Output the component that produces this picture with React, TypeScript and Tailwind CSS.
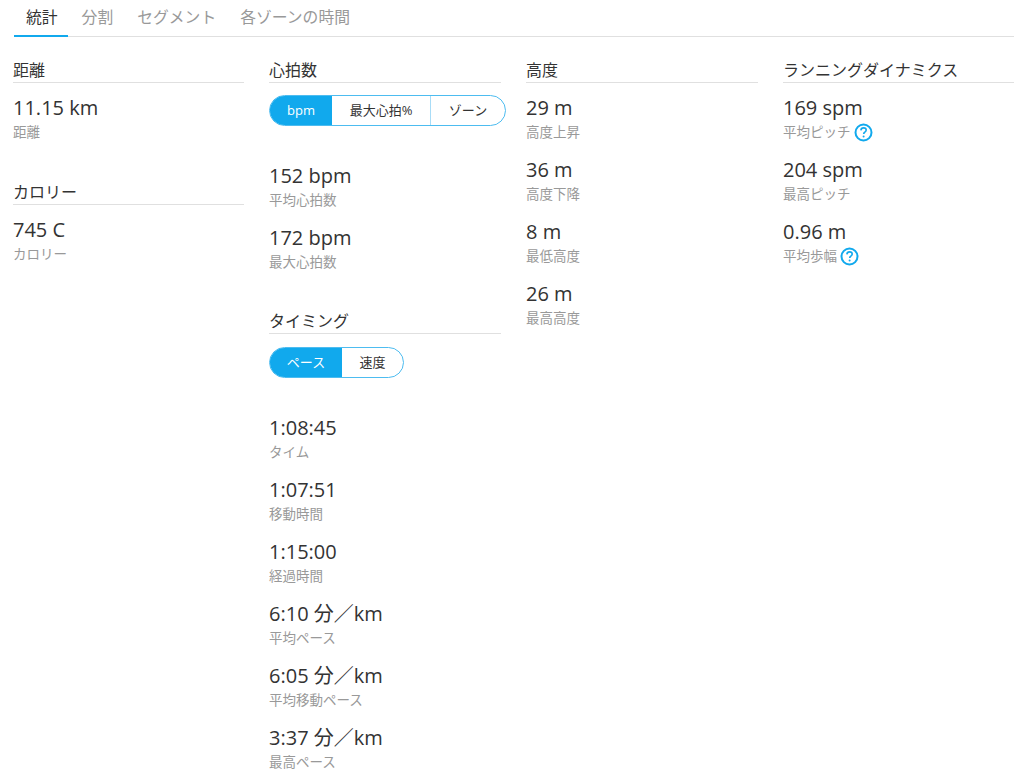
const FONT = "font-['Open_Sans','Noto_Sans_CJK_JP',sans-serif]"

const TABS = ['統計', '分割', 'セグメント', '各ゾーンの時間']

const HelpIcon = () => (
  <svg width="19" height="19" viewBox="0 0 19 19" fill="none" className="-mt-[2px] shrink-0">
    <circle cx="9.5" cy="9.5" r="8" stroke="#11a9ed" strokeWidth="2" />
    <path d="M6.9 7.4c.1-1.6 1.2-2.5 2.7-2.5 1.5 0 2.6.9 2.6 2.2 0 1-.5 1.5-1.4 2.1-.8.5-1.1.9-1.1 1.8" stroke="#11a9ed" strokeWidth="1.6" />
    <circle cx="9.6" cy="13.4" r="1" fill="#11a9ed" />
  </svg>
)

const Stat = ({ value, label, help }: { value: string; label: string; help?: boolean }) => (
  <div className="h-[62px]">
    <div className="h-[34px] text-[20px] leading-[34px] text-[#333]">{value}</div>
    <div className="flex h-[28px] items-start gap-[3px] text-[13.5px] leading-[14px] text-[#999]">
      {label}
      {help && <HelpIcon />}
    </div>
  </div>
)

const Heading = ({ title }: { title: string }) => (
  <h3 className="mb-[8px] h-[26px] border-b border-[#e0e0e0] text-[16px] leading-[26px] font-normal text-[#333]">{title}</h3>
)

const Toggle = ({ items, widths }: { items: string[]; widths: string[] }) => (
  <div className="pt-[4px] pb-[33px]">
    <div className="flex h-[31px] w-fit overflow-hidden rounded-[16px] border border-[#4dbcf0] text-[13px] text-[#333]">
      {items.map((item, i) => (
        <div
          key={item}
          className={`flex items-center justify-center ${widths[i]} ${i === 0 ? 'bg-[#11a9ed] text-white' : ''} ${i > 1 ? 'border-l border-[#a8dcf7]' : ''}`}
        >
          {item}
        </div>
      ))}
    </div>
  </div>
)

export default function App() {
  return (
    <div className={`h-[777px] w-[1024px] overflow-hidden bg-white ${FONT}`}>
      <nav className="mr-[10px] ml-[14px] flex h-[37px] border-b border-[#e0e0e0] text-[15.8px] leading-[35px]">
        {TABS.map((tab, i) => (
          <div
            key={tab}
            className={`h-[37px] whitespace-nowrap px-[12px] ${i === 0 ? 'mr-[1.6px] w-[54px] border-b-2 border-[#11a9ed] text-[#333]' : 'text-[#999]'}`}
          >
            {tab}
          </div>
        ))}
      </nav>

      <div className="mt-[20px] ml-[13px] grid w-[1001px] grid-cols-[231px_232px_232px_231px] gap-x-[25px]">
        <div>
          <Heading title="距離" />
          <Stat value="11.15 km" label="距離" />
          <div className="h-[26px]" />
          <Heading title="カロリー" />
          <Stat value="745 C" label="カロリー" />
        </div>

        <div>
          <Heading title="心拍数" />
          <Toggle items={['bpm', '最大心拍%', 'ゾーン']} widths={['w-[62px]', 'w-[98px]', 'w-[75px]']} />
          <Stat value="152 bpm" label="平均心拍数" />
          <Stat value="172 bpm" label="最大心拍数" />
          <div className="h-[25px]" />
          <Heading title="タイミング" />
          <div className="h-px" />
          <Toggle items={['ペース', '速度']} widths={['w-[72px]', 'w-[61px]']} />
          <Stat value="1:08:45" label="タイム" />
          <Stat value="1:07:51" label="移動時間" />
          <Stat value="1:15:00" label="経過時間" />
          <Stat value="6:10 分／km" label="平均ペース" />
          <Stat value="6:05 分／km" label="平均移動ペース" />
          <Stat value="3:37 分／km" label="最高ペース" />
        </div>

        <div>
          <Heading title="高度" />
          <Stat value="29 m" label="高度上昇" />
          <Stat value="36 m" label="高度下降" />
          <Stat value="8 m" label="最低高度" />
          <Stat value="26 m" label="最高高度" />
        </div>

        <div>
          <Heading title="ランニングダイナミクス" />
          <Stat value="169 spm" label="平均ピッチ" help />
          <Stat value="204 spm" label="最高ピッチ" />
          <Stat value="0.96 m" label="平均歩幅" help />
        </div>
      </div>
    </div>
  )
}
